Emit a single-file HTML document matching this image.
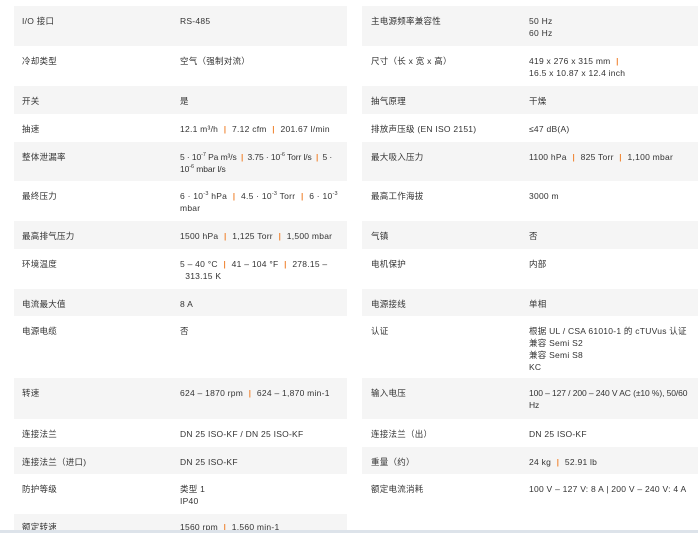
<!DOCTYPE html>
<html><head><meta charset="utf-8"><style>
body{margin:0;width:698px;height:533px;overflow:hidden;background:#fff;font-family:"Liberation Sans","Noto Sans CJK SC",sans-serif;font-size:8.5px;letter-spacing:0.25px;color:#333;position:relative}
.r{position:absolute;box-sizing:border-box}
.g{background:#f5f5f5}
.L{left:14px;width:333px}
.R{left:362px;width:336px}
.r span{position:absolute;top:9px;line-height:12px;white-space:nowrap}
.L .k{left:8px}.L .v{left:166px}
.R .k{left:9px}.R .v{left:167px}
.p{color:#f08a3c;margin:0 3px;font-weight:bold}
.t{letter-spacing:-0.1px}.t .p{margin:0 2px}
sup{font-size:5.5px;line-height:0}
.bl{position:absolute;left:0;top:530px;width:698px;height:3px;background:#dde3ea}
</style></head><body>
<div class="r L g" style="top:6px;height:40px"><span class="k">I/O 接口</span><span class="v">RS-485</span></div>
<div class="r L" style="top:46px;height:40px"><span class="k">冷却类型</span><span class="v">空气（强制对流）</span></div>
<div class="r L g" style="top:86px;height:28px"><span class="k">开关</span><span class="v">是</span></div>
<div class="r L" style="top:114px;height:28px"><span class="k">抽速</span><span class="v">12.1 m³/h <b class="p">|</b> 7.12 cfm <b class="p">|</b> 201.67 l/min</span></div>
<div class="r L g" style="top:142px;height:39px"><span class="k">整体泄漏率</span><span class="v t">5 · 10<sup>-7</sup> Pa m³/s <b class="p">|</b> 3.75 · 10<sup>-6</sup> Torr l/s <b class="p">|</b> 5 ·<br>10<sup>-6</sup> mbar l/s</span></div>
<div class="r L" style="top:181px;height:40px"><span class="k">最终压力</span><span class="v">6 · 10<sup>-3</sup> hPa <b class="p">|</b> 4.5 · 10<sup>-3</sup> Torr <b class="p">|</b> 6 · 10<sup>-3</sup><br>mbar</span></div>
<div class="r L g" style="top:221px;height:28px"><span class="k">最高排气压力</span><span class="v">1500 hPa <b class="p">|</b> 1,125 Torr <b class="p">|</b> 1,500 mbar</span></div>
<div class="r L" style="top:249px;height:40px"><span class="k">环境温度</span><span class="v">5 – 40 °C <b class="p">|</b> 41 – 104 °F <b class="p">|</b> 278.15 –<br>&nbsp;&nbsp;313.15 K</span></div>
<div class="r L g" style="top:289px;height:27px"><span class="k">电流最大值</span><span class="v">8 A</span></div>
<div class="r L" style="top:316px;height:62px"><span class="k">电源电缆</span><span class="v">否</span></div>
<div class="r L g" style="top:378px;height:41px"><span class="k">转速</span><span class="v">624 – 1870 rpm <b class="p">|</b> 624 – 1,870 min-1</span></div>
<div class="r L" style="top:419px;height:28px"><span class="k">连接法兰</span><span class="v">DN 25 ISO-KF / DN 25 ISO-KF</span></div>
<div class="r L g" style="top:447px;height:27px"><span class="k">连接法兰（进口)</span><span class="v">DN 25 ISO-KF</span></div>
<div class="r L" style="top:474px;height:40px"><span class="k">防护等级</span><span class="v">类型 1<br>IP40</span></div>
<div class="r L g" style="top:514px;height:19px"><span class="k" style="top:7px">额定转速</span><span class="v" style="top:7px">1560 rpm <b class="p">|</b> 1,560 min-1</span></div>

<div class="r R g" style="top:6px;height:40px"><span class="k">主电源频率兼容性</span><span class="v">50 Hz<br>60 Hz</span></div>
<div class="r R" style="top:46px;height:40px"><span class="k">尺寸（长 x 宽 x 高）</span><span class="v">419 x 276 x 315 mm <b class="p">|</b><br>16.5 x 10.87 x 12.4 inch</span></div>
<div class="r R g" style="top:86px;height:28px"><span class="k">抽气原理</span><span class="v">干燥</span></div>
<div class="r R" style="top:114px;height:28px"><span class="k">排放声压级 (EN ISO 2151)</span><span class="v">≤47 dB(A)</span></div>
<div class="r R g" style="top:142px;height:39px"><span class="k">最大吸入压力</span><span class="v">1100 hPa <b class="p">|</b> 825 Torr <b class="p">|</b> 1,100 mbar</span></div>
<div class="r R" style="top:181px;height:40px"><span class="k">最高工作海拔</span><span class="v">3000 m</span></div>
<div class="r R g" style="top:221px;height:28px"><span class="k">气镇</span><span class="v">否</span></div>
<div class="r R" style="top:249px;height:40px"><span class="k">电机保护</span><span class="v">内部</span></div>
<div class="r R g" style="top:289px;height:27px"><span class="k">电源接线</span><span class="v">单相</span></div>
<div class="r R" style="top:316px;height:62px"><span class="k">认证</span><span class="v">根据 UL / CSA 61010-1 的 cTUVus 认证<br>兼容 Semi S2<br>兼容 Semi S8<br>KC</span></div>
<div class="r R g" style="top:378px;height:41px"><span class="k">输入电压</span><span class="v t">100 – 127 / 200 – 240 V AC (±10 %), 50/60<br>Hz</span></div>
<div class="r R" style="top:419px;height:28px"><span class="k">连接法兰（出）</span><span class="v">DN 25 ISO-KF</span></div>
<div class="r R g" style="top:447px;height:27px"><span class="k">重量（约）</span><span class="v">24 kg <b class="p">|</b> 52.91 lb</span></div>
<div class="r R" style="top:474px;height:40px"><span class="k">额定电流消耗</span><span class="v">100 V – 127 V: 8 A | 200 V – 240 V: 4 A</span></div>
<div class="bl"></div>
</body></html>
